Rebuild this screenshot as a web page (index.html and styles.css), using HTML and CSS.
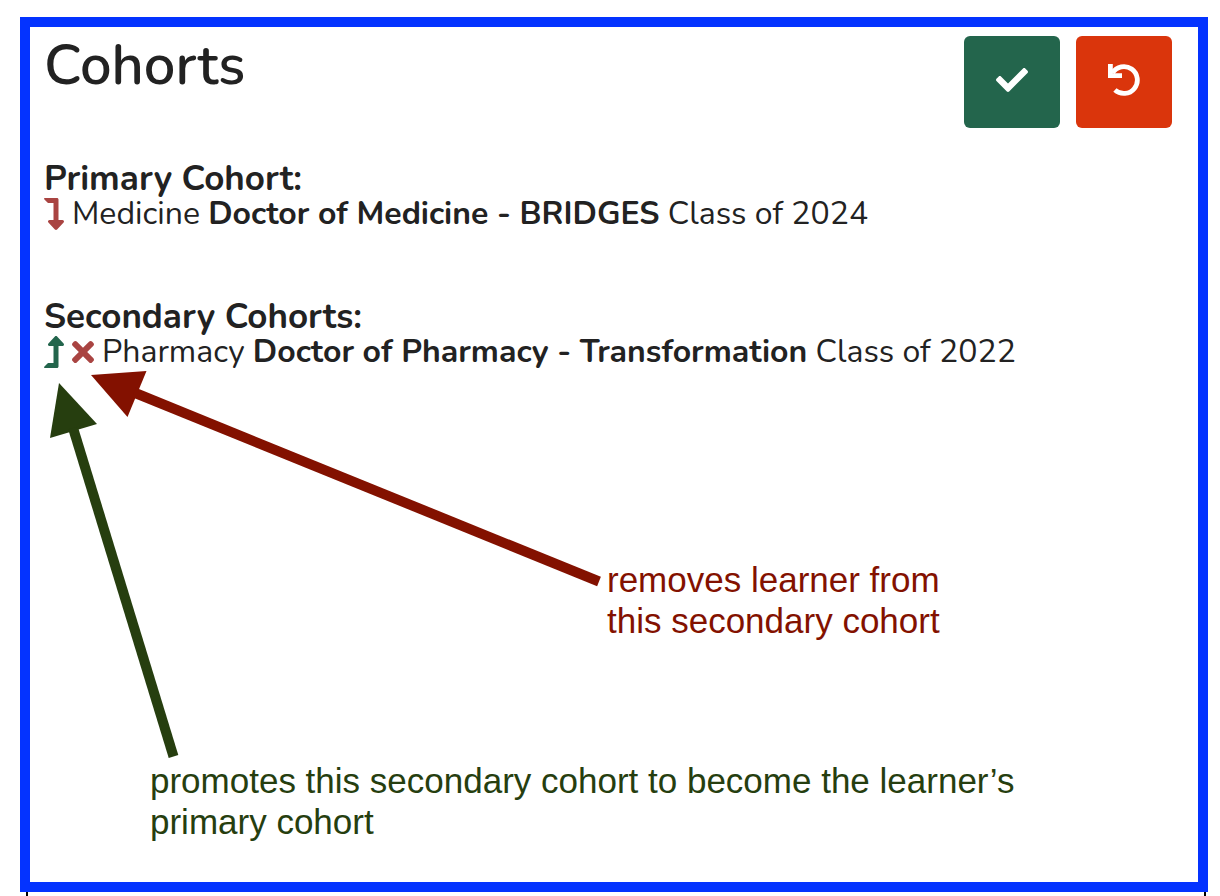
FILE: index.html
```html
<!DOCTYPE html>
<html lang="en">
<head>
<meta charset="utf-8">
<meta name="viewport" content="width=device-width, initial-scale=1">
<title>Cohorts</title>
<link rel="stylesheet" href="styles.css">
</head>
<body>
<main class="panel">
  <header class="panel-header">
    <h1 class="title">Cohorts</h1>
    <div class="actions">
      <button type="button" class="action save" aria-label="Save">
        <svg width="32" height="32" viewBox="0 0 512 512" fill="currentColor"><path d="M173.898 439.404l-166.4-166.4c-9.997-9.997-9.997-26.206 0-36.204l36.203-36.204c9.997-9.998 26.207-9.998 36.204 0L192 312.69 432.095 72.596c9.997-9.997 26.207-9.997 36.204 0l36.203 36.204c9.997 9.997 9.997 26.206 0 36.204l-294.4 294.401c-9.998 9.997-26.207 9.997-36.204-.001z"/></svg>
      </button>
      <button type="button" class="action undo" aria-label="Undo">
        <svg width="32" height="32" viewBox="0 0 32 32"><path d="M4.500 9A13.4 13.4 0 1 1 6.9 25.9" fill="none" stroke="currentColor" stroke-width="4.800"/><path d="M0 0h4.800v9.3H14V14H0z" fill="currentColor"/></svg>
      </button>
    </div>
  </header>

  <section class="cohort-group">
    <h2 class="group-title">Primary Cohort:</h2>
    <div class="cohort">
      <button type="button" class="icon-button remove" aria-label="Demote to secondary cohort">
        <svg width="20" height="32" viewBox="0 0 320 512" fill="currentColor"><path d="M313.553 392.331L209.587 504.334c-9.485 10.214-25.676 10.229-35.174 0L70.438 392.331C56.232 377.031 67.062 352 88.025 352H152V80H68.024a11.996 11.996 0 0 1-8.485-3.515l-56-56C-4.021 12.926 1.333 0 12.024 0H208c13.255 0 24 10.745 24 24v328h63.966c20.878 0 31.851 24.969 17.587 40.331z"/></svg>
      </button>
      <span>Medicine <strong>Doctor of Medicine - BRIDGES</strong> Class of 2024</span>
    </div>
  </section>

  <section class="cohort-group">
    <h2 class="group-title">Secondary Cohorts:</h2>
    <div class="cohort">
      <button type="button" class="icon-button promote" aria-label="Promote to primary cohort">
        <svg width="20" height="32" viewBox="0 0 320 512" fill="currentColor"><path transform="matrix(1 0 0 -1 0 512)" d="M313.553 392.331L209.587 504.334c-9.485 10.214-25.676 10.229-35.174 0L70.438 392.331C56.232 377.031 67.062 352 88.025 352H152V80H68.024a11.996 11.996 0 0 1-8.485-3.515l-56-56C-4.021 12.926 1.333 0 12.024 0H208c13.255 0 24 10.745 24 24v328h63.966c20.878 0 31.851 24.969 17.587 40.331z"/></svg>
      </button>
      <button type="button" class="icon-button remove" aria-label="Remove cohort">
        <svg width="22" height="32" viewBox="0 0 352 512" fill="currentColor"><path d="M242.72 256l100.07-100.07c12.28-12.28 12.28-32.19 0-44.48l-22.24-22.24c-12.28-12.28-32.19-12.28-44.48 0L176 189.28 75.93 89.21c-12.28-12.28-32.19-12.28-44.48 0L9.21 111.45c-12.28 12.28-12.28 32.19 0 44.48L109.28 256 9.21 356.07c-12.28 12.28-12.28 32.19 0 44.48l22.24 22.24c12.28 12.28 32.2 12.28 44.48 0L176 322.72l100.07 100.07c12.28 12.28 32.2 12.28 44.48 0l22.24-22.24c12.28-12.28 12.28-32.19 0-44.48L242.72 256z"/></svg>
      </button>
      <span>Pharmacy <strong>Doctor of Pharmacy - Transformation</strong> Class of 2022</span>
    </div>
  </section>

  <p class="note note-remove">removes learner from<br>this secondary cohort</p>
  <p class="note note-promote">promotes this secondary cohort to become the learner’s<br>primary cohort</p>

  <svg class="arrows" width="580" height="740" viewBox="30 27 580 740" aria-hidden="true">
    <g class="arrow-remove">
      <path d="M91 375L146.5 371L127.5 417z"/>
      <path d="M134 392.500L599 581.500" stroke-width="10"/>
    </g>
    <g class="arrow-promote">
      <path d="M59 383L97 424L50 438z"/>
      <path d="M73 428L173.500 756.500" stroke-width="10"/>
    </g>
  </svg>
</main>
<div class="page-edges"></div>
</body>
</html>
```
FILE: styles.css
```css
* {
  box-sizing: border-box;
}

body {
  margin: 0;
  min-height: 100vh;
  display: flex;
  flex-direction: column;
  padding: 17px 12px 0 20px;
  background: #fff;
  color: #222;
  font-family: Nunito, Lato, sans-serif;
  font-size: 32px;
  line-height: 35px;
}

h1,
h2,
p {
  margin: 0;
}

.panel {
  position: relative;
  border: 10px solid #0433ff;
  padding: 9px 26px 40px 14px;
}

.panel-header {
  display: flex;
  justify-content: space-between;
  align-items: flex-start;
  margin-bottom: 33px;
}

.title {
  font-size: 56px;
  font-weight: 600;
  line-height: 60px;
}

.actions {
  display: flex;
  gap: 16px;
}

.action {
  display: flex;
  align-items: center;
  justify-content: center;
  width: 96px;
  height: 92px;
  padding: 0 0 4px;
  border: 0;
  border-radius: 6px;
  color: #fff;
}

.save {
  background: #23654c;
}

.undo {
  background: #da350c;
}

.cohort-group {
  margin-bottom: 68px;
}

.group-title {
  font-size: 35px;
  font-weight: 700;
  line-height: 35px;
}

.cohort {
  display: flex;
  align-items: center;
  gap: 8px;
}

.icon-button {
  display: flex;
  padding: 0;
  border: 0;
  background: none;
}

.remove {
  color: #a94442;
}

.promote {
  color: #23654c;
}

.note {
  font-family: "Liberation Sans", Arial, sans-serif;
  font-size: 35px;
  line-height: 41px;
}

.note-remove {
  margin: 190px 0 0 563px;
  color: #831100;
}

.note-promote {
  margin: 119px 0 0 106px;
  color: #263e0f;
}

.arrows {
  position: absolute;
  top: 0;
  left: 0;
  pointer-events: none;
}

.arrow-remove {
  fill: #831100;
  stroke: #831100;
  stroke-width: 0;
}

.arrow-promote {
  fill: #263e0f;
  stroke: #263e0f;
  stroke-width: 0;
}

.page-edges {
  flex: 1;
  margin: 0 2px 0 6px;
  border: solid #000;
  border-width: 0 2px;
}
```
